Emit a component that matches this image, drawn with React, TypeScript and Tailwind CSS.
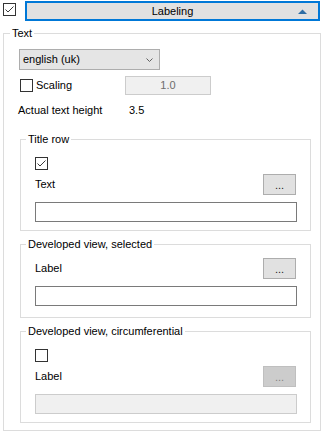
import React from "react";

function Check({ checked, className = "" }: { checked?: boolean; className?: string }) {
  return (
    <div className={`w-[13px] h-[13px] border border-[#333333] bg-white shrink-0 ${className}`}>
      {checked && (
        <svg width="11" height="11" viewBox="0 0 11 11" className="block">
          <path d="M1.5 5.5 L4 8 L9.5 2.5" stroke="#3a3a3a" fill="none" strokeWidth="1" />
        </svg>
      )}
    </div>
  );
}

function DotsButton({ disabled }: { disabled?: boolean }) {
  return (
    <div
      className={
        disabled
          ? "w-[33px] h-[21px] border border-[#bfbfbf] bg-[#cccccc] text-[#838383] flex items-center justify-center leading-none pt-[2px]"
          : "w-[33px] h-[21px] border border-[#adadad] bg-[#e1e1e1] text-[#222222] flex items-center justify-center leading-none pt-[2px]"
      }
    >
      ...
    </div>
  );
}

function TextBox({ disabled }: { disabled?: boolean }) {
  return (
    <div
      className={
        disabled
          ? "ml-[14px] mt-[7px] w-[262px] h-[20px] border border-[#cccccc] bg-[#f0f0f0]"
          : "ml-[14px] mt-[7px] w-[262px] h-[20px] border border-[#7a7a7a] bg-white"
      }
    />
  );
}

export default function App() {
  return (
    <div className="w-[328px] h-[435px] bg-white text-black text-[11px] font-['Liberation_Sans',Arial,sans-serif] overflow-hidden">
      <div className="flex items-start pt-[1px]">
        <Check checked className="ml-[3px] mt-[2px]" />
        <div className="ml-[9px] w-[295px] h-[20px] border-2 border-[#0078d7] bg-[#e1e1e1] grid grid-cols-[1fr_auto_1fr] items-center">
          <div />
          <div className="leading-none">Labeling</div>
          <div className="flex justify-end pr-[11px] pt-[1px]">
            <svg width="9" height="5" viewBox="0 0 9 5" className="block">
              <polygon points="0,5 4.5,0.5 9,5" fill="#2f6ea5" />
            </svg>
          </div>
        </div>
      </div>

      <fieldset className="ml-[3px] mt-[6px] w-[318px] h-[404px] border border-[#dcdcdc]">
        <legend className="ml-[6px] px-[2px] leading-[13px]">Text</legend>
        <div className="flex flex-col">
          <div className="mt-[9px] ml-[15px] w-[141px] h-[21px] border border-[#adadad] bg-[#e5e5e5] flex items-center justify-between pl-[3px] pr-[6px]">
            <span className="leading-none">english (uk)</span>
            <svg width="7" height="4" viewBox="0 0 7 4" className="block">
              <path d="M0.5 0.5 L3.5 3.5 L6.5 0.5" stroke="#606060" fill="none" strokeWidth="1" />
            </svg>
          </div>

          <div className="mt-[6px] h-[19px] flex items-center">
            <div className="ml-[16px] w-[105px] flex items-center">
              <Check />
              <span className="ml-[3px] leading-none">Scaling</span>
            </div>
            <div className="w-[86px] h-[19px] border border-[#cccccc] bg-[#f0f0f0] text-[#6d6d6d] flex items-center justify-center leading-none">
              1.0
            </div>
          </div>

          <div className="mt-[9px] h-[13px] ml-[14px] flex items-center leading-none">
            <span className="w-[111px]">Actual text height</span>
            <span>3.5</span>
          </div>

          <fieldset className="mt-[16px] ml-[16px] w-[291px] h-[98px] border border-[#dcdcdc]">
            <legend className="ml-[5px] px-[2px] leading-[13px]">Title row</legend>
            <div className="flex flex-col">
              <Check checked className="ml-[14px] mt-[11px]" />
              <div className="mt-[4px] ml-[14px] w-[261px] h-[21px] flex items-center justify-between">
                <span className="leading-none">Text</span>
                <DotsButton />
              </div>
              <TextBox />
            </div>
          </fieldset>

          <fieldset className="mt-[7px] ml-[16px] w-[291px] h-[80px] border border-[#dcdcdc]">
            <legend className="ml-[5px] px-[2px] leading-[13px]">Developed view, selected</legend>
            <div className="flex flex-col">
              <div className="mt-[7px] ml-[14px] w-[261px] h-[21px] flex items-center justify-between">
                <span className="leading-none">Label</span>
                <DotsButton />
              </div>
              <TextBox />
            </div>
          </fieldset>

          <fieldset className="mt-[7px] ml-[16px] w-[291px] h-[98px] border border-[#dcdcdc]">
            <legend className="ml-[5px] px-[2px] leading-[13px]">Developed view, circumferential</legend>
            <div className="flex flex-col">
              <Check className="ml-[14px] mt-[11px]" />
              <div className="mt-[4px] ml-[14px] w-[261px] h-[21px] flex items-center justify-between">
                <span className="leading-none">Label</span>
                <DotsButton disabled />
              </div>
              <TextBox disabled />
            </div>
          </fieldset>
        </div>
      </fieldset>
    </div>
  );
}
